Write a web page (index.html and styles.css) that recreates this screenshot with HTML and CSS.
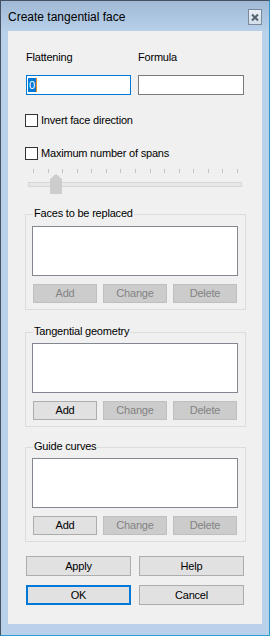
FILE: index.html
```html
<!DOCTYPE html>
<html lang="en">
<head>
  <meta charset="UTF-8" />
  <title>Create tangential face</title>
  <link rel="stylesheet" href="styles.css">
</head>
<body>
  <div class="window">
    <!-- Title bar -->
    <div class="title-bar">
      <span class="title">Create tangential face</span>
      <span class="close-btn">
        <svg width="12" height="13" viewBox="0 0 12 13">
          <path d="M3 3.5 L9 9.5 M9 3.5 L3 9.5" stroke="#55636f" stroke-width="2" fill="none"/>
        </svg>
      </span>
    </div>

    <div class="client">
      <!-- Flattening / Formula -->
      <div class="field-row">
        <div class="field">
          <label class="field-label">Flattening</label>
          <div class="text-input focused"><span class="selected">0</span></div>
        </div>
        <div class="field">
          <label class="field-label">Formula</label>
          <div class="text-input"></div>
        </div>
      </div>

      <div class="check-row first">
        <span class="check-box"></span>
        <span class="check-label">Invert face direction</span>
      </div>
      <div class="check-row">
        <span class="check-box"></span>
        <span class="check-label">Maximum number of spans</span>
      </div>

      <!-- Disabled slider -->
      <div class="slider">
        <div class="ticks">
          <i></i><i></i><i></i><i></i><i></i><i></i><i></i><i></i>
          <i></i><i></i><i></i><i></i><i></i><i></i><i></i>
        </div>
        <div class="track"></div>
        <svg class="thumb" width="12" height="20" viewBox="0 0 12 20">
          <path d="M0 5 L6 0 L12 5 L12 20 L0 20 Z" fill="#cdcdcd"/>
        </svg>
      </div>

      <!-- Groups -->
      <div class="group g1">
        <span class="legend">Faces to be replaced</span>
        <div class="list-box"></div>
        <div class="btn-row">
          <button class="btn disabled">Add</button>
          <button class="btn disabled">Change</button>
          <button class="btn disabled">Delete</button>
        </div>
      </div>

      <div class="group g2">
        <span class="legend">Tangential geometry</span>
        <div class="list-box"></div>
        <div class="btn-row">
          <button class="btn">Add</button>
          <button class="btn disabled">Change</button>
          <button class="btn disabled">Delete</button>
        </div>
      </div>

      <div class="group g3">
        <span class="legend">Guide curves</span>
        <div class="list-box"></div>
        <div class="btn-row">
          <button class="btn">Add</button>
          <button class="btn disabled">Change</button>
          <button class="btn disabled">Delete</button>
        </div>
      </div>

      <!-- Dialog buttons -->
      <div class="dialog-row first">
        <button class="btn wide">Apply</button>
        <button class="btn wide">Help</button>
      </div>
      <div class="dialog-row">
        <button class="btn wide default">OK</button>
        <button class="btn wide">Cancel</button>
      </div>
    </div>
  </div>
</body>
</html>
```

FILE: styles.css
```css
/* Global resets */
* {
  margin: 0;
  padding: 0;
  box-sizing: border-box;
}
body {
  font-family: 'Liberation Sans', Arial, sans-serif;
  font-size: 11px;
  letter-spacing: -0.2px;
  color: #000;
  background-color: #b9d1ea;
}
/* Window frame */
.window {
  width: 270px;
  height: 636px;
  border: 1px solid #46525f;
  border-right-color: #2a9fcf;
  border-bottom-color: #2a9fcf;
  background: linear-gradient(to bottom, #a0b9d6, #b9d1ea 32px);
  padding: 0 7px 11px 7px;
  display: flex;
  flex-direction: column;
}
.title-bar {
  height: 30px;
  display: flex;
  justify-content: space-between;
  align-items: flex-start;
}
.title {
  font-size: 12px;
  letter-spacing: 0;
  line-height: 15px;
  padding-top: 9px;
}
.close-btn {
  width: 14px;
  height: 16px;
  margin-top: 8px;
  border: 1px solid #7b8a9b;
  background: linear-gradient(to bottom, #e8eff7, #d3deea);
  display: flex;
  align-items: center;
  justify-content: center;
}
/* Client area */
.client {
  flex: 1;
  background-color: #f0f0f0;
  padding: 20px 16px 0 17px;
}
.field-row {
  display: flex;
  gap: 7px;
  margin-left: 1px;
}
.field {
  display: flex;
  flex-direction: column;
}
.field:first-child {
  width: 105px;
}
.field:last-child {
  width: 106px;
}
.field-label {
  line-height: 13px;
  height: 13px;
}
.text-input {
  margin-top: 11px;
  height: 20px;
  background-color: #fff;
  border: 1px solid #7a7a7a;
  padding: 2px 0 0 1px;
  line-height: 14px;
}
.text-input.focused {
  border-color: #0078d7;
}
.selected {
  display: inline-block;
  background-color: #0078d7;
  color: #fff;
  padding: 0 1px;
  border-right: 1px solid #f08a24;
}
/* Checkboxes */
.check-row {
  display: flex;
  align-items: center;
  height: 13px;
  margin-top: 20px;
}
.check-row.first {
  margin-top: 19px;
}
.check-box {
  width: 13px;
  height: 13px;
  border: 1px solid #333;
  background-color: #fff;
}
.check-label {
  margin-left: 3px;
  line-height: 13px;
}
/* Slider */
.slider {
  position: relative;
  width: 214px;
  height: 27px;
  margin: 9px 0 0 3px;
}
.ticks {
  height: 4px;
  display: flex;
  justify-content: space-between;
  padding: 0 4px 0 5px;
}
.ticks i {
  width: 1px;
  height: 4px;
  background-color: #c4c4c4;
}
.track {
  margin-top: 9px;
  height: 5px;
  background-color: #e7e7e7;
  border: 1px solid #d6d6d6;
}
.thumb {
  position: absolute;
  left: 22px;
  top: 5px;
}
/* Group boxes */
.group {
  position: relative;
  width: 221px;
  border: 1px solid #dcdcdc;
  padding: 11px 7px 6px 6px;
}
.g1 {
  margin-top: 18px;
}
.g2 {
  margin-top: 22px;
  padding-top: 10px;
}
.g3 {
  margin-top: 20px;
  padding-top: 10px;
}
.legend {
  position: absolute;
  left: 7px;
  top: -8px;
  padding: 0 1px;
  line-height: 13px;
  background-color: #f0f0f0;
}
.list-box {
  height: 50px;
  background-color: #fff;
  border: 1px solid #828790;
}
.btn-row {
  display: flex;
  gap: 6px;
  margin-top: 8px;
  padding-left: 1px;
}
/* Buttons */
.btn {
  font-family: 'Liberation Sans', Arial, sans-serif;
  font-size: 11px;
  letter-spacing: -0.2px;
  color: #000;
  width: 64px;
  height: 19px;
  background-color: #e1e1e1;
  border: 1px solid #adadad;
  line-height: 15px;
}
.btn.disabled {
  background-color: #cccccc;
  border-color: #bfbfbf;
  color: #838383;
}
.dialog-row {
  display: flex;
  gap: 8px;
  margin: 9px 0 0 1px;
}
.dialog-row.first {
  margin-top: 14px;
}
.btn.wide {
  width: 105px;
  height: 20px;
}
.btn.default {
  border: 2px solid #0078d7;
}
```
